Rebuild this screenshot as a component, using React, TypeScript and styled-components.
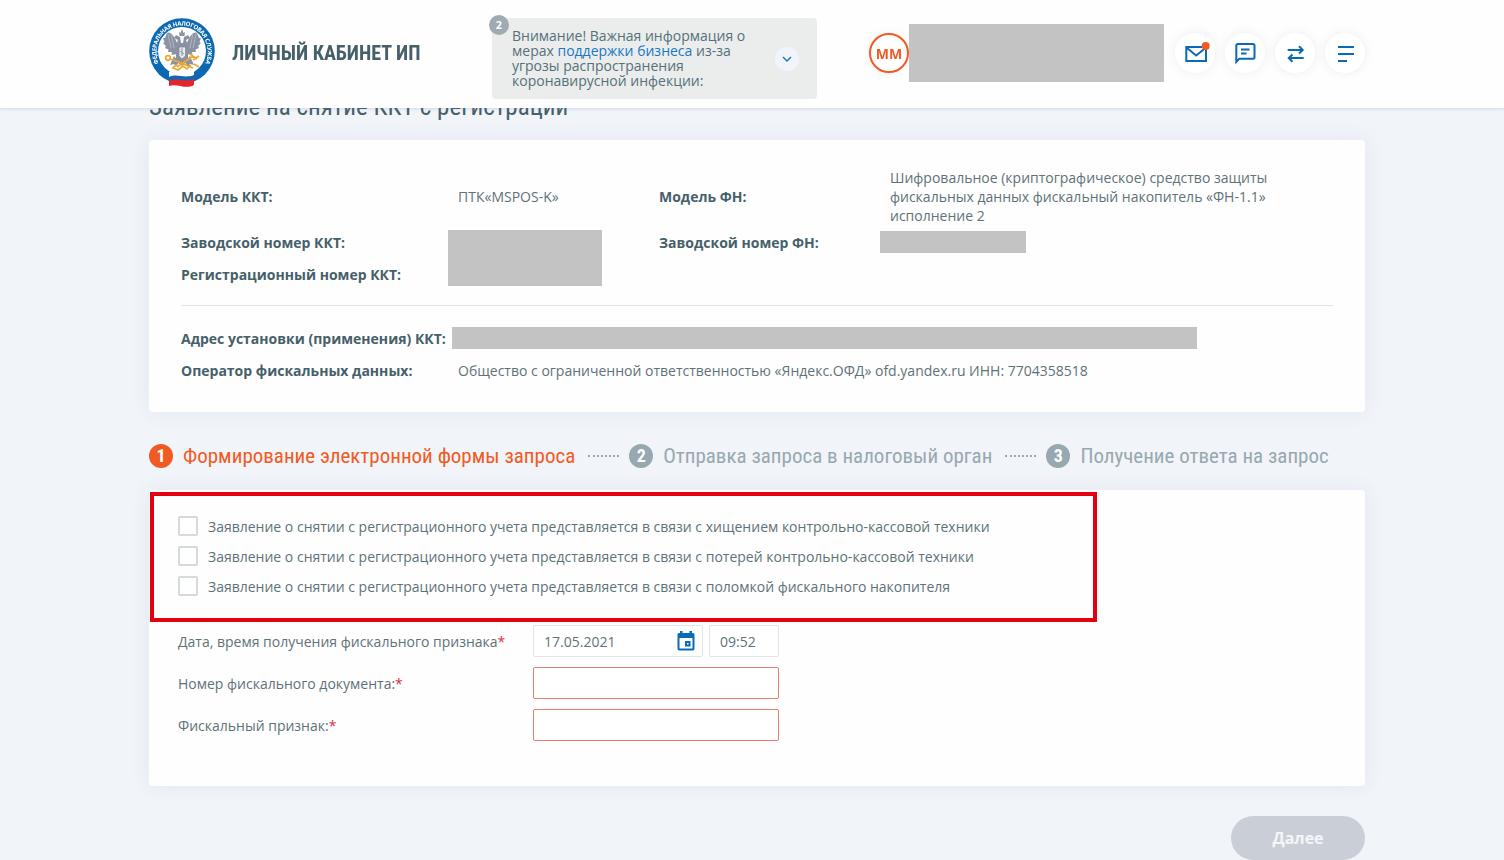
import React from "react";
import styled, { createGlobalStyle } from "styled-components";

const color = {
  ink: "#46606a",
  text: "#5f7278",
  muted: "#98a8b0",
  blue: "#0a6ab8",
  orange: "#f15a22",
  mask: "#c3c3c3",
  page: "#f1f4f9",
};

const narrow = `"Roboto Condensed", "Liberation Sans Narrow", "Open Sans", sans-serif`;

const GlobalStyle = createGlobalStyle`
  *, *::before, *::after { box-sizing: border-box; }
  body {
    margin: 0;
    background: ${color.page};
    color: ${color.text};
    font-family: "Open Sans", "Noto Sans", sans-serif;
    font-size: 14px;
    line-height: 19px;
  }
  button, input { font: inherit; color: inherit; }
`;

const Header = styled.header`
  position: fixed;
  z-index: 2;
  top: 0;
  left: 0;
  right: 0;
  display: flex;
  align-items: flex-start;
  height: 108px;
  padding: 18px 139px 0 149px;
  background: #fefefe;
  box-shadow: 0 1px 3px rgba(90, 100, 150, 0.2);
`;

const Brand = styled.a`
  display: flex;
  flex: 0 0 343px;
  align-items: center;
  gap: 17px;
  height: 70px;
  color: ${color.ink};
  text-decoration: none;
`;

const BrandName = styled.span`
  font: bold 20px/28px ${narrow};
  white-space: nowrap;
`;

const Notice = styled.section`
  position: relative;
  display: flex;
  flex: 0 0 325px;
  align-items: center;
  justify-content: space-between;
  height: 81px;
  padding: 0 18px 0 20px;
  border-radius: 4px;
  background: #ebeded;
  line-height: 15px;
  color: #55707a;
`;

const NoticeText = styled.p`
  margin: 0;
  padding-bottom: 2px;
  width: 244px;
`;

const NoticeLink = styled.a`
  color: #1a77c2;
  text-decoration: none;
`;

const NoticeCount = styled.span`
  position: absolute;
  top: -3px;
  left: -3px;
  width: 20px;
  height: 20px;
  border-radius: 50%;
  background: #9fabb1;
  color: #fff;
  font-size: 11px;
  font-weight: bold;
  line-height: 20px;
  text-align: center;
`;

const Expand = styled.button`
  width: 24px;
  height: 24px;
  padding: 0;
  border: 0;
  border-radius: 50%;
  background: #f1f4fa;
  svg { display: block; }
`;

const UserBar = styled.div`
  display: flex;
  align-items: center;
  margin: 6px 0 0 auto;
`;

const Avatar = styled.span`
  width: 40px;
  height: 40px;
  border: 2px solid ${color.orange};
  border-radius: 50%;
  background: #fff;
  box-shadow: 0 0 10px rgba(0, 0, 0, 0.06);
  color: ${color.orange};
  font: bold 14px/38px "Open Sans", sans-serif;
  text-align: center;
`;

const Mask = styled.div<{ $w: number; $h: number }>`
  width: 100%;
  max-width: ${(p) => p.$w}px;
  height: ${(p) => p.$h}px;
  background: ${color.mask};
`;

const UserName = styled(Mask)`
  width: 255px;
  margin-right: 11px;
`;

const Actions = styled.nav`
  display: flex;
  gap: 10px;
`;

const RoundButton = styled.button`
  width: 40px;
  height: 40px;
  padding: 0;
  border: 0;
  border-radius: 50%;
  background: #fff;
  box-shadow: 0 0 12px rgba(0, 0, 0, 0.07);
  svg { display: block; }
`;

const Main = styled.main`
  padding: 91px 139px 0 149px;
`;

const Title = styled.h1`
  margin: 0 0 17px;
  color: ${color.ink};
  font: normal 25px/32px ${narrow};
`;

const Card = styled.section`
  border-radius: 4px;
  background: #fefefe;
  box-shadow: 0 0 20px rgba(70, 90, 140, 0.08);
`;

const InfoCard = styled(Card)`
  padding: 27px 32px 25px;
`;

const DeviceGrid = styled.dl`
  display: grid;
  grid-template-columns: 267px 211px 221px minmax(0, 400px);
  grid-template-rows: 59px 32px 32px;
  margin: 0;
  padding-bottom: 15px;
  border-bottom: 1px solid #e3e6e8;
`;

const PlaceGrid = styled.dl`
  display: grid;
  grid-template-columns: 271px minmax(0, 1fr);
  grid-template-rows: 32px 32px;
  margin: 16px 0 1px;
`;

const Term = styled.dt<{ $col?: number }>`
  grid-column: ${(p) => p.$col ?? 1};
  align-self: center;
  color: ${color.ink};
  font-weight: bold;
  white-space: nowrap;
`;

const Value = styled.dd<{ $pad?: number; $rows?: number }>`
  grid-row: span ${(p) => p.$rows ?? 1};
  align-self: center;
  margin: 0;
  padding-left: ${(p) => p.$pad ?? 0}px;
`;

const Steps = styled.ol`
  display: flex;
  align-items: center;
  gap: 10px;
  height: 78px;
  margin: 0;
  padding: 10px 0 0;
  list-style: none;
`;

const Step = styled.li<{ $active?: boolean }>`
  display: flex;
  align-items: center;
  gap: 10px;
  color: ${(p) => (p.$active ? color.orange : color.muted)};
  font: normal 21px/32px ${narrow};
  white-space: nowrap;

  &:not(:last-child)::after {
    content: "";
    width: 31px;
    margin-left: 3px;
    border-top: 2px dotted ${color.muted};
  }
`;

const StepNumber = styled.span<{ $active?: boolean }>`
  width: 24px;
  height: 24px;
  border-radius: 50%;
  background: ${(p) => (p.$active ? color.orange : color.muted)};
  color: #fff;
  font: bold 18px/24px ${narrow};
  text-align: center;
`;

const FormCard = styled(Card)`
  padding: 2px 1px 45px;
`;

const Reasons = styled.fieldset`
  display: grid;
  gap: 10px;
  max-width: 947px;
  height: 130px;
  margin: 0 0 3px;
  padding: 20px 24px 22px;
  border: 4px solid #e3000f;
`;

const Reason = styled.label`
  display: flex;
  align-items: center;
  gap: 10px;
  height: 20px;
`;

const Checkbox = styled.input`
  appearance: none;
  width: 20px;
  height: 20px;
  margin: 0;
  border: 2px solid #d5dbdd;
  border-radius: 2px;
  background: #fff;
`;

const Fields = styled.div`
  display: grid;
  grid-template-columns: 355px 246px;
  gap: 10px 0;
  padding-left: 28px;
  align-items: center;
`;

const Required = styled.span`
  color: #d8323c;
`;

const Pair = styled.div`
  display: grid;
  grid-template-columns: 170px 70px;
  gap: 6px;
`;

const InputBox = styled.span<{ $invalid?: boolean }>`
  display: flex;
  align-items: center;
  height: 32px;
  padding: 0 7px 0 10px;
  border: 1px solid ${(p) => (p.$invalid ? "#e27d70" : "#e1e5e6")};
  border-radius: 2px;
  background: #fff;
`;

const Input = styled.input`
  flex: 1;
  width: 0;
  min-width: 0;
  padding: 0;
  border: 0;
  outline: 0;
  background: none;
`;

const CalendarButton = styled.button`
  width: 18px;
  height: 20px;
  padding: 0;
  border: 0;
  background: none;
  svg { display: block; }
`;

const Footer = styled.footer`
  display: flex;
  justify-content: flex-end;
  padding-top: 30px;
`;

const NextButton = styled.button`
  width: 134px;
  height: 44px;
  border: 0;
  border-radius: 22px;
  background: #cacfd7;
  color: #f4f6f9;
  font-size: 16px;
  font-weight: bold;
`;

const Emblem = () => (
  <svg width="66" height="71" viewBox="0 0 66 71" aria-hidden="true">
    <defs>
      <path id="ring" d="M12.500 53 A28 28 0 0 1 5.500 33 A27.500 27.500 0 0 1 60.500 33 A28 28 0 0 1 53.500 53" />
    </defs>
    <circle cx="33" cy="33" r="32.8" fill="#0b68b3" />
    <circle cx="33" cy="33" r="24" fill="#fff" />
    <text fill="#fff" fontFamily="Open Sans, sans-serif" fontSize="6" fontWeight="700" dy="2">
      <textPath href="#ring" startOffset="50%" textAnchor="middle">ФЕДЕРАЛЬНАЯ НАЛОГОВАЯ СЛУЖБА</textPath>
    </text>
    <g fill="#8b93a3">
      <path d="M28 25 C25 17 21 13 18 15 L16 20 L14 20 L15.500 24 L14 25 L17 28 L16 30 L19.500 31.500 L19 34 L23 34 L22.500 37 L28 36 Z" />
      <path d="M38 25 C41 17 45 13 48 15 L50 20 L52 20 L50.500 24 L52 25 L49 28 L50 30 L46.500 31.500 L47 34 L43 34 L43.500 37 L38 36 Z" />
      <path d="M27 27 L29 22 L25 20 L27 17 L31 19 L32 25 L34 25 L35 19 L39 17 L41 20 L37 22 L39 27 L39 43 L33 48 L27 43 Z" />
      <path d="M30 14 L31.500 15 L33 11 L34.500 15 L36 14 L35.500 18 L30.500 18 Z" />
      <path d="M25 38 L21 47 L25 46 L27 49 L30 44 Z M41 38 L45 47 L41 46 L39 49 L36 44 Z" />
    </g>
    <path d="M30 29 H36.500 V38 L33 41 L30 38 Z" fill="#e9ebef" stroke="#7c8596" strokeWidth="0.700" />
    <path d="M33 30 V38 M31 33 L35 36" stroke="#8b93a3" strokeWidth="1" />
    <path d="M19 16 L22 30 M22 15 L25 30 M47 16 L44 30 M44 15 L41 30" stroke="#c7ccd5" strokeWidth="0.600" />
    <g fill="none" stroke="#eda72f" strokeWidth="1.700">
      <circle cx="19" cy="40" r="2.300" />
      <path d="M21 41 L27 43 L44 50 M28 49 L44 38 M41 36 L48 41 M44 42 L50 38 M45 46 L50 49 M28 46 L24 50 L29 52 L34 48 L38 51 L42 47" />
    </g>
    <path d="M20 54 C27 50 34 58 45 53 V68 C36 72 29 66 20 69 Z" fill="#fff" />
    <path d="M20 59 C28 55 35 61 45 57 V63 C36 66 29 60 20 64 Z" fill="#1765b0" />
    <path d="M20 63 C28 59 35 65 45 61 V67 C36 72 29 65 20 68 Z" fill="#e4252c" />
  </svg>
);

const Glyph = ({ children }: { children: React.ReactNode }) => (
  <svg width="40" height="40" viewBox="0 0 40 40" fill="none" stroke={color.blue} strokeWidth="2" aria-hidden="true">
    {children}
  </svg>
);

const reasons = [
  "Заявление о снятии с регистрационного учета представляется в связи с хищением контрольно-кассовой техники",
  "Заявление о снятии с регистрационного учета представляется в связи с потерей контрольно-кассовой техники",
  "Заявление о снятии с регистрационного учета представляется в связи с поломкой фискального накопителя",
];

const steps = [
  "Формирование электронной формы запроса",
  "Отправка запроса в налоговый орган",
  "Получение ответа на запрос",
];

export default function App() {
  return (
    <>
      <GlobalStyle />
      <Header>
        <Brand href="#">
          <Emblem />
          <BrandName>ЛИЧНЫЙ КАБИНЕТ ИП</BrandName>
        </Brand>
        <Notice>
          <NoticeCount>2</NoticeCount>
          <NoticeText>
            Внимание! Важная информация о мерах <NoticeLink href="#">поддержки бизнеса</NoticeLink> из-за угрозы
            распространения коронавирусной инфекции:
          </NoticeText>
          <Expand type="button" aria-label="Развернуть">
            <svg width="24" height="24" viewBox="0 0 24 24" fill="none" stroke="#1a77c2" strokeWidth="1.500">
              <path d="M8 10 L12 14 L16 10" />
            </svg>
          </Expand>
        </Notice>
        <UserBar>
          <Avatar>ММ</Avatar>
          <UserName $w={255} $h={58} />
          <Actions>
            <RoundButton type="button" aria-label="Сообщения">
              <Glyph>
                <path d="M11.300 14 H31 V28 H11.300 Z M12 15 L21.200 22.500 L30.500 15" />
                <circle cx="30.700" cy="13" r="4" fill={color.orange} stroke="none" />
              </Glyph>
            </RoundButton>
            <RoundButton type="button" aria-label="Чат">
              <Glyph>
                <path d="M11.300 29 V12.500 Q11.300 11 13 11 H28 Q29.500 11 29.500 12.500 V24.200 Q29.500 25.700 28 25.700 H14.300 Z" />
                <path d="M16 16.500 H24.500 M16 20.500 H21.500" />
              </Glyph>
            </RoundButton>
            <RoundButton type="button" aria-label="Сменить пользователя">
              <Glyph>
                <path d="M12.700 17 H28 M24 13.300 L27.700 17 L24 20.500 M28.700 25 H13.500 M17.500 21.500 L13.800 25 L17.500 28.700" />
              </Glyph>
            </RoundButton>
            <RoundButton type="button" aria-label="Меню">
              <Glyph>
                <path d="M13 14 H29 M13 21 H29 M13 28 H22" />
              </Glyph>
            </RoundButton>
          </Actions>
        </UserBar>
      </Header>

      <Main>
        <Title>Заявление на снятие ККТ с регистрации</Title>

        <InfoCard>
          <DeviceGrid>
            <Term>Модель ККТ:</Term>
            <Value $pad={10}>ПТК«MSPOS-K»</Value>
            <Term $col={3}>Модель ФН:</Term>
            <Value $pad={10}>
              Шифровальное (криптографическое) средство защиты фискальных данных фискальный накопитель «ФН-1.1»
              исполнение 2
            </Value>
            <Term>Заводской номер ККТ:</Term>
            <Value $rows={2}>
              <Mask $w={154} $h={56} />
            </Value>
            <Term $col={3}>Заводской номер ФН:</Term>
            <Value>
              <Mask $w={146} $h={22} />
            </Value>
            <Term>Регистрационный номер ККТ:</Term>
          </DeviceGrid>
          <PlaceGrid>
            <Term>Адрес установки (применения) ККТ:</Term>
            <Value>
              <Mask $w={745} $h={22} />
            </Value>
            <Term>Оператор фискальных данных:</Term>
            <Value $pad={6}>
              Общество с ограниченной ответственностью «Яндекс.ОФД» ofd.yandex.ru ИНН: 7704358518
            </Value>
          </PlaceGrid>
        </InfoCard>

        <Steps>
          {steps.map((name, i) => (
            <Step key={name} $active={i === 0}>
              <StepNumber $active={i === 0}>{i + 1}</StepNumber>
              {name}
            </Step>
          ))}
        </Steps>

        <FormCard as="form">
          <Reasons aria-label="Причина снятия с учета">
            {reasons.map((reason) => (
              <Reason key={reason}>
                <Checkbox type="checkbox" />
                {reason}
              </Reason>
            ))}
          </Reasons>
          <Fields>
            <label htmlFor="date">
              Дата, время получения фискального признака<Required>*</Required>
            </label>
            <Pair>
              <InputBox>
                <Input id="date" defaultValue="17.05.2021" />
                <CalendarButton type="button" aria-label="Выбрать дату">
                  <svg width="18" height="20" viewBox="0 0 18 20" aria-hidden="true">
                    <path
                      fill={color.blue}
                      fillRule="evenodd"
                      d="M3 0 H5.500 V2 H12.500 V0 H15 V2 H16 Q17.500 2 17.500 3.500 V17.500 Q17.500 19.500 16 19.500 H2 Q0.500 19.500 0.500 17.500 V3.500 Q0.500 2 2 2 H3 Z M2.500 7 V17.500 H15.500 V7 Z M8 10 H13.500 V15.500 H8 Z M10 12 V13.500 H11.500 V12 Z"
                    />
                  </svg>
                </CalendarButton>
              </InputBox>
              <InputBox>
                <Input aria-label="Время" defaultValue="09:52" />
              </InputBox>
            </Pair>
            <label htmlFor="document">
              Номер фискального документа:<Required>*</Required>
            </label>
            <InputBox $invalid>
              <Input id="document" />
            </InputBox>
            <label htmlFor="sign">
              Фискальный признак:<Required>*</Required>
            </label>
            <InputBox $invalid>
              <Input id="sign" />
            </InputBox>
          </Fields>
        </FormCard>

        <Footer>
          <NextButton type="button">Далее</NextButton>
        </Footer>
      </Main>
    </>
  );
}
